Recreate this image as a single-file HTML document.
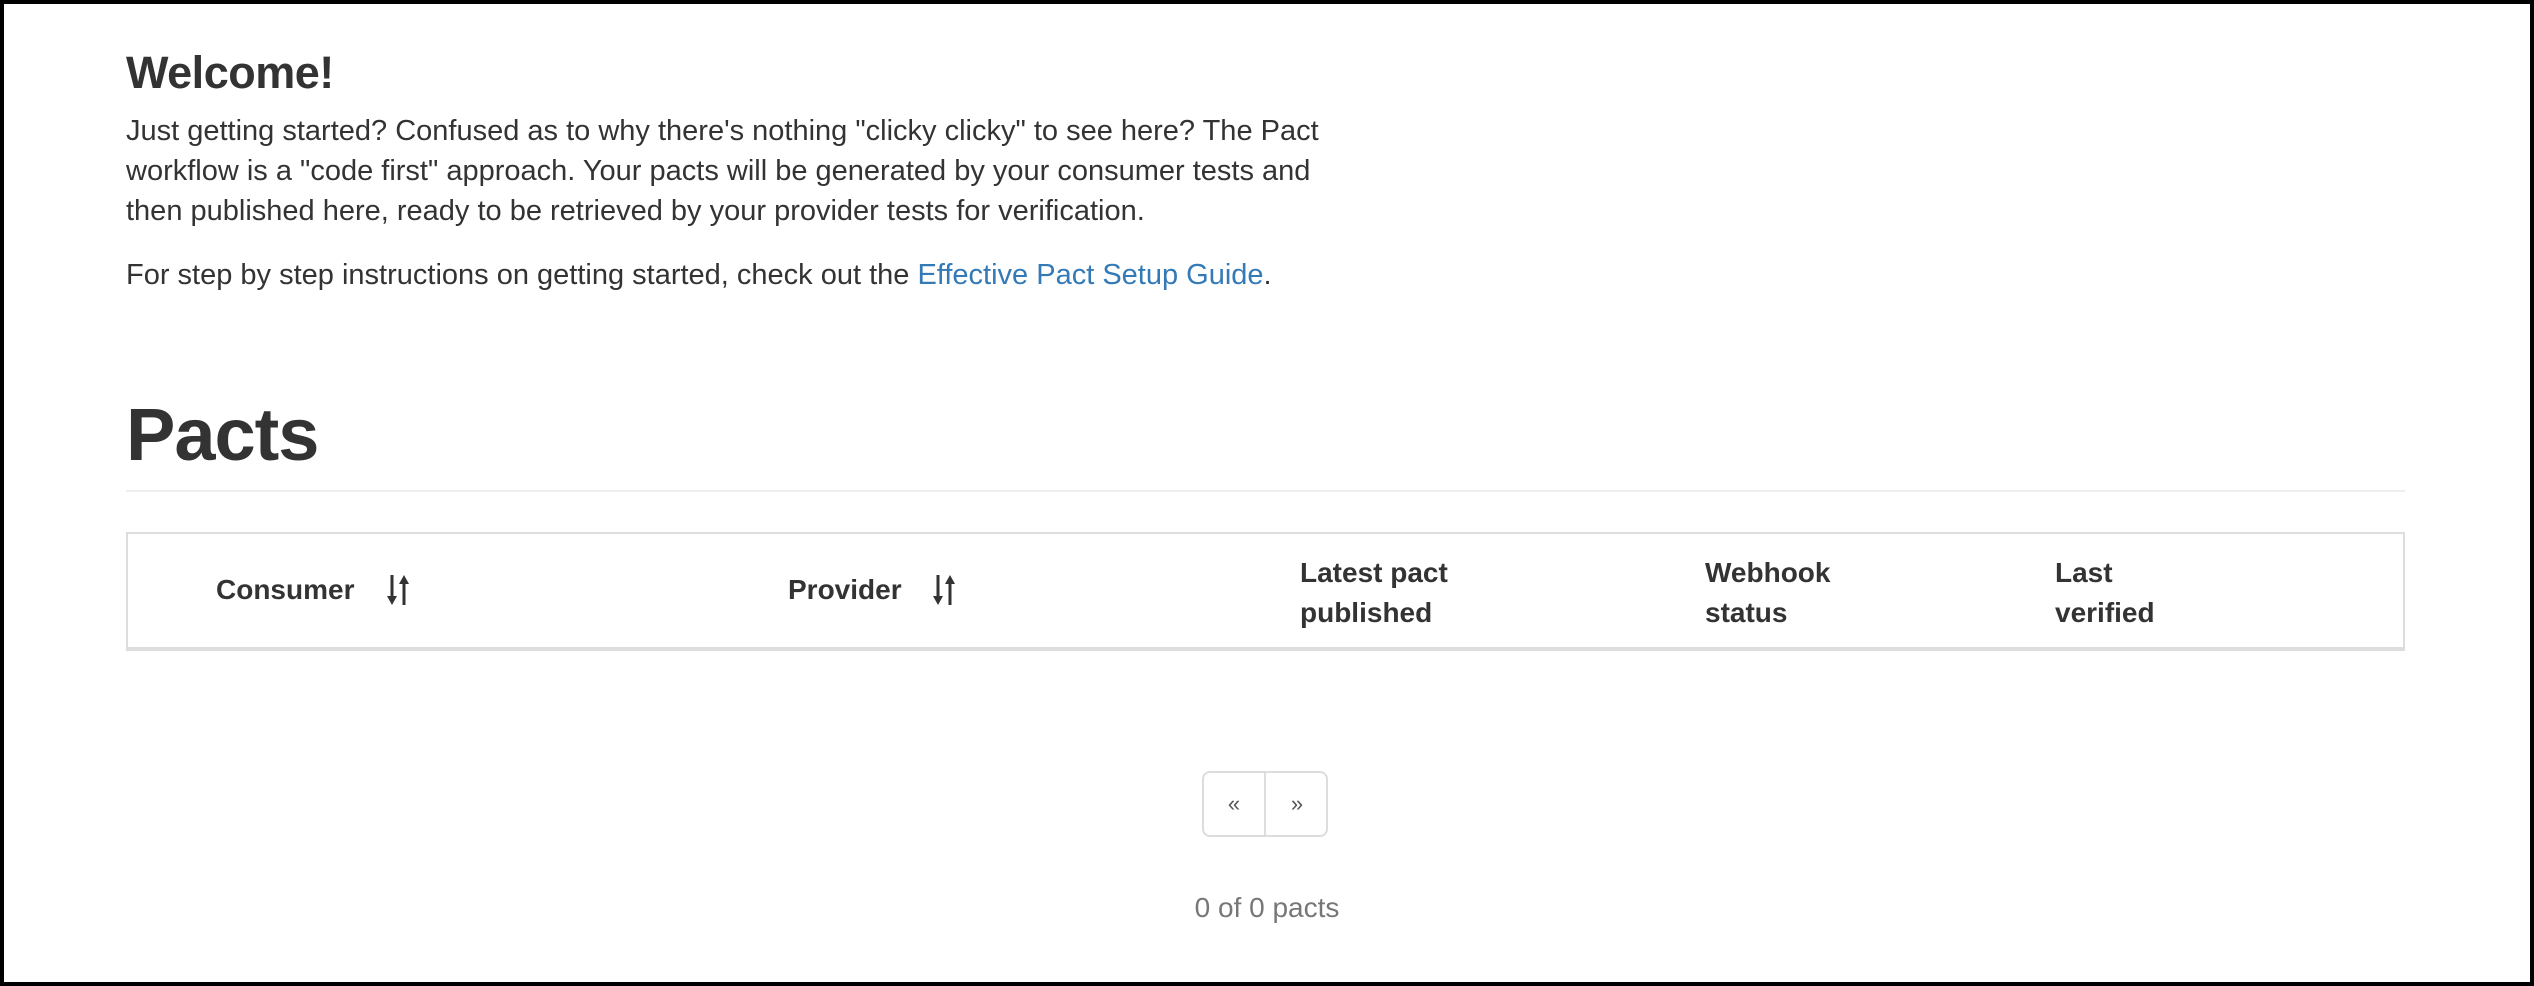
<!DOCTYPE html>
<html><head><meta charset="utf-8"><style>
*{box-sizing:border-box;margin:0;padding:0}
html,body{width:2534px;height:986px;overflow:hidden;background:#fff}
body{font-family:"Liberation Sans",Helvetica,Arial,sans-serif;color:#333;position:relative;border:4px solid #000}
.a{position:absolute;white-space:nowrap}
h3{position:absolute;left:122px;top:41px;font-size:45px;font-weight:bold;line-height:56px;letter-spacing:-0.5px}
.p{position:absolute;left:122px;font-size:29px;line-height:40px}
a{color:#337ab7;text-decoration:none}
h1{position:absolute;left:122px;top:386px;font-size:74px;font-weight:bold;line-height:90px;letter-spacing:-1px}
.hr{position:absolute;left:122px;top:486px;width:2279px;height:2px;background:#eee}
.tbl{position:absolute;left:122px;top:528px;width:2279px;height:119px;border:2px solid #ddd;border-bottom:4px solid #ddd}
.th{position:absolute;font-weight:bold;font-size:28px;line-height:40px}
.pg{position:absolute;left:1198px;top:767px;width:126px;height:66px;border:2px solid #ddd;border-radius:8px;color:#555;font-size:22px}
.pg span{position:absolute;top:0;width:62px;height:62px;line-height:62px;text-align:center}
.cnt{position:absolute;left:0;width:2526px;text-align:center;top:884px;font-size:28px;line-height:40px;color:#777}
</style></head><body>
<h3>Welcome!</h3>
<div class="p" style="top:107px">Just getting started? Confused as to why there's nothing "clicky clicky" to see here? The Pact<br>workflow is a "code first" approach. Your pacts will be generated by your consumer tests and<br>then published here, ready to be retrieved by your provider tests for verification.</div>
<div class="p" style="top:251px">For step by step instructions on getting started, check out the <a>Effective Pact Setup Guide</a>.</div>
<h1>Pacts</h1>
<div class="hr"></div>
<div class="tbl"></div>
<div class="th a" style="left:212px;top:566px">Consumer</div>
<svg class="a" style="left:380px;top:569px" width="28" height="34" viewBox="0 0 28 34"><path d="M8 2v24" stroke="#333" stroke-width="3"/><path d="M3 23l5 9 5-9z" fill="#333"/><path d="M20 32V8" stroke="#333" stroke-width="3"/><path d="M15 11l5-9 5 9z" fill="#333"/></svg>
<div class="th a" style="left:784px;top:566px">Provider</div>
<svg class="a" style="left:926px;top:569px" width="28" height="34" viewBox="0 0 28 34"><path d="M8 2v24" stroke="#333" stroke-width="3"/><path d="M3 23l5 9 5-9z" fill="#333"/><path d="M20 32V8" stroke="#333" stroke-width="3"/><path d="M15 11l5-9 5 9z" fill="#333"/></svg>
<div class="th a" style="left:1296px;top:549px">Latest pact<br>published</div>
<div class="th a" style="left:1701px;top:549px">Webhook<br>status</div>
<div class="th a" style="left:2051px;top:549px">Last<br>verified</div>
<div class="pg"><span style="left:0;border-right:2px solid #ddd">«</span><span style="left:62px">»</span></div>
<div class="cnt">0 of 0 pacts</div>
</body></html>
